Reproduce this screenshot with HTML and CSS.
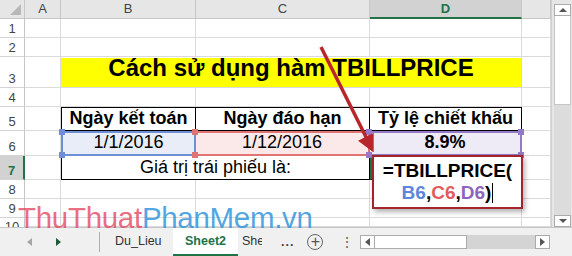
FILE: index.html
```html
<!DOCTYPE html>
<html lang="vi">
<head>
    <meta charset="UTF-8">
    <title>Cách sử dụng hàm TBILLPRICE</title>
    <link rel="stylesheet" href="styles.css">
</head>
<body>
    <div class="app">
        <div class="sheet-area">
            <div class="grid">
                <div class="corner"><span class="corner-tri"></span></div>
                <div class="col-head">A</div>
                <div class="col-head">B</div>
                <div class="col-head">C</div>
                <div class="col-head active">D</div>
                <div class="col-head"></div>

                <div class="row-head">1</div>
                <div class="cell"></div><div class="cell"></div><div class="cell"></div><div class="cell"></div><div class="cell"></div>

                <div class="row-head">2</div>
                <div class="cell"></div><div class="cell"></div><div class="cell"></div><div class="cell"></div><div class="cell"></div>

                <div class="row-head">3</div>
                <div class="cell"></div>
                <div class="cell title span3">Cách sử dụng hàm TBILLPRICE</div>
                <div class="cell"></div>

                <div class="row-head">4</div>
                <div class="cell"></div><div class="cell"></div><div class="cell"></div><div class="cell"></div><div class="cell"></div>

                <div class="row-head">5</div>
                <div class="cell"></div>
                <div class="cell th bl bt">Ngày kết toán</div>
                <div class="cell th bt">Ngày đáo hạn</div>
                <div class="cell th bt">Tỷ lệ chiết khấu</div>
                <div class="cell"></div>

                <div class="row-head">6</div>
                <div class="cell"></div>
                <div class="cell ref ref-blue">1/1/2016<i class="h tl"></i><i class="h bl2"></i></div>
                <div class="cell ref ref-red">1/12/2016<i class="h tl"></i><i class="h bl2"></i></div>
                <div class="cell ref ref-purple bold">8.9%<i class="h tl"></i><i class="h tr"></i><i class="h bl2"></i><i class="h br"></i></div>
                <div class="cell"></div>

                <div class="row-head active">7</div>
                <div class="cell"></div>
                <div class="cell td bl span2">Giá trị trái phiếu là:</div>
                <div class="cell td current"></div>
                <div class="cell"></div>

                <div class="row-head">8</div>
                <div class="cell"></div><div class="cell"></div><div class="cell"></div><div class="cell"></div><div class="cell"></div>

                <div class="row-head">9</div>
                <div class="cell"></div><div class="cell"></div><div class="cell"></div><div class="cell"></div><div class="cell"></div>

                <div class="row-head last">10</div>
                <div class="cell"></div><div class="cell"></div><div class="cell"></div><div class="cell"></div><div class="cell"></div>
            </div>

            <div class="vscroll">
                <div class="sb-btn"><span class="tri-up"></span></div>
                <div class="sb-thumb"></div>
                <div class="sb-track"></div>
                <div class="sb-btn"><span class="tri-down"></span></div>
            </div>

            <svg class="arrow" width="572" height="228" viewBox="0 0 572 228">
                <defs>
                    <marker id="head" markerWidth="5" markerHeight="5" refX="2" refY="2.5" orient="auto" markerUnits="strokeWidth">
                        <path d="M0,0 L5,2.5 L0,5 Z" fill="#b8262c"/>
                    </marker>
                </defs>
                <line x1="321" y1="47" x2="369" y2="143" stroke="#b8262c" stroke-width="3.5" marker-end="url(#head)"/>
            </svg>

            <div class="formula-box">
                <div>=TBILLPRICE(</div>
                <div><span class="c-blue">B6</span>,<span class="c-red">C6</span>,<span class="c-purple">D6</span>)<span class="caret"></span></div>
            </div>
        </div>

        <div class="tabbar">
            <div class="nav">
                <span class="tri-left"></span>
                <span class="tri-right"></span>
            </div>
            <div class="tabs">
                <span class="tab first">Du_Lieu</span>
                <span class="tab selected">Sheet2</span>
                <span class="tab cut">Sheet3</span>
                <span class="more">...</span>
                <span class="add">+</span>
                <span class="dots">⋮</span>
            </div>
            <div class="hscroll">
                <div class="sb-btn"><span class="tri-left small"></span></div>
                <div class="sb-thumb"></div>
                <div class="sb-track"></div>
                <div class="sb-btn"><span class="tri-right small gray"></span></div>
            </div>
        </div>

        <div class="watermark"><span class="wm-red">ThuThuat</span><span class="wm-blue">PhanMem.vn</span></div>
    </div>
</body>
</html>
```

FILE: styles.css
```css
* {
    margin: 0;
    padding: 0;
    box-sizing: border-box;
}

body {
    font-family: 'Liberation Sans', Arial, sans-serif;
    background: #ffffff;
    width: 572px;
    height: 256px;
    overflow: hidden;
}

.app {
    position: relative;
    width: 572px;
    height: 256px;
}

.sheet-area {
    position: relative;
    display: flex;
    height: 228px;
    border-bottom: 1px solid #c6c6c6;
}

.grid {
    display: grid;
    grid-template-columns: 25px 36px 135px 174px 152px 29px;
    grid-template-rows: 19px 19px 19px 31px 19px 24px 25px 24px 19px 19px 9px;
    width: 551px;
    overflow: hidden;
}

.corner {
    position: relative;
    background: #e6e6e6;
    border-right: 1px solid #c6c6c6;
    border-bottom: 1px solid #c6c6c6;
}

.corner-tri {
    position: absolute;
    right: 3px;
    bottom: 3px;
    width: 0;
    height: 0;
    border-left: 11px solid transparent;
    border-bottom: 11px solid #b8b8b8;
}

.col-head {
    background: #e6e6e6;
    border-right: 1px solid #c6c6c6;
    border-bottom: 1px solid #c6c6c6;
    color: #444;
    font-size: 13px;
    text-align: center;
    line-height: 18px;
}

.col-head.active {
    background: #d2d2d2;
    color: #217346;
    font-weight: bold;
    border-bottom: 2px solid #217346;
}

.row-head {
    background: #ffffff;
    border-right: 1px solid #c6c6c6;
    border-bottom: 1px solid #d4d4d4;
    color: #444;
    font-size: 13px;
    text-align: center;
    display: flex;
    align-items: flex-end;
    justify-content: center;
    padding-bottom: 1px;
    overflow: hidden;
}

.row-head.last {
    align-items: flex-start;
    padding-top: 1px;
    border-bottom: none;
}

.row-head.active {
    background: #d2d2d2;
    color: #217346;
    font-weight: bold;
    border-right: 2px solid #217346;
}

.cell {
    position: relative;
    border-right: 1px solid #dadada;
    border-bottom: 1px solid #dadada;
    font-size: 18px;
    color: #000;
    display: flex;
    align-items: flex-end;
    justify-content: center;
    white-space: nowrap;
}

.span3 { grid-column: span 3; }
.span2 { grid-column: span 2; }

.title {
    background: #ffff00;
    border-top: 1px solid #ffffff;
    font-size: 24px;
    font-weight: bold;
    padding-bottom: 5px;
}

.th {
    font-weight: bold;
    border-right: 1px solid #000;
    border-bottom: 1px solid #000;
    padding-bottom: 1px;
}

.bt { border-top: 1px solid #000; }
.bl { border-left: 1px solid #000; }
.bold { font-weight: bold; }

.td {
    border-right: 1px solid #000;
    border-bottom: 1px solid #000;
    padding-bottom: 1px;
}

.current {
    border-left: 2px solid #217346;
}

.ref {
    padding-bottom: 1px;
}

.ref-blue {
    background: #e8edf8;
    border: 2px solid #6d8fd6;
}

.ref-red {
    background: #fbe9e9;
    border: 2px solid #e07373;
    border-left: none;
}

.ref-purple {
    background: #eeeaf6;
    border: 2px solid #9379c6;
    border-left: none;
}

.h {
    position: absolute;
    width: 6px;
    height: 6px;
    z-index: 2;
}

.ref-blue .h { background: #6d8fd6; }
.ref-red .h { background: #e07373; }
.ref-purple .h { background: #9379c6; }

.h.tl { left: -4px; top: -4px; }
.h.bl2 { left: -4px; bottom: -4px; }
.h.tr { right: -4px; top: -4px; }
.h.br { right: -4px; bottom: -4px; }

.vscroll {
    width: 21px;
    background: #e6e6e6;
    border-left: 1px solid #d0d0d0;
    padding: 4px 1px 0 2px;
    display: flex;
    flex-direction: column;
}

.sb-btn {
    height: 12px;
    background: #ffffff;
    border: 1px solid #ababab;
    display: flex;
    align-items: center;
    justify-content: center;
    flex-shrink: 0;
}

.vscroll .sb-thumb {
    height: 89px;
    background: #ffffff;
    border: 1px solid #c6c6c6;
    border-top: none;
}

.vscroll .sb-track {
    flex: 1;
    background: #dcdcdc;
}

.tri-up {
    border-left: 4px solid transparent;
    border-right: 4px solid transparent;
    border-bottom: 4px solid #555;
}

.tri-down {
    border-left: 4px solid transparent;
    border-right: 4px solid transparent;
    border-top: 4px solid #555;
}

.tri-left {
    border-top: 4px solid transparent;
    border-bottom: 4px solid transparent;
    border-right: 5px solid #a6a6a6;
}

.tri-right {
    border-top: 4px solid transparent;
    border-bottom: 4px solid transparent;
    border-left: 5px solid #1e5c38;
}

.tri-left.small { border-right-color: #555; }
.tri-right.gray { border-left-color: #555; }

.arrow {
    position: absolute;
    left: 0;
    top: 0;
    pointer-events: none;
    z-index: 5;
}

.formula-box {
    position: absolute;
    left: 372px;
    top: 155px;
    width: 151px;
    height: 54px;
    background: #ffffff;
    border: 2px solid #a3242a;
    box-shadow: 2px 3px 5px rgba(0, 0, 0, 0.3);
    font-size: 19px;
    font-weight: bold;
    line-height: 22px;
    text-align: center;
    padding-top: 3px;
    z-index: 4;
}

.c-blue { color: #5b86dc; }
.c-red { color: #e25c5c; }
.c-purple { color: #8d64c0; }

.caret {
    display: inline-block;
    width: 1px;
    height: 20px;
    background: #000;
    vertical-align: -4px;
    margin-left: 1px;
}

.tabbar {
    display: flex;
    align-items: center;
    height: 28px;
    background: #f0f0f0;
    font-size: 12.5px;
    color: #333;
}

.nav {
    display: flex;
    align-items: center;
    gap: 24px;
    width: 100px;
    flex-shrink: 0;
    padding-left: 27px;
    height: 20px;
    border-right: 1px solid #b0b0b0;
}

.tabs {
    display: flex;
    align-items: center;
    height: 28px;
    width: 260px;
    flex-shrink: 0;
}

.tab {
    flex-shrink: 0;
    height: 28px;
    line-height: 26px;
    color: #333;
    white-space: nowrap;
}

.tab.first {
    width: 73px;
    padding-left: 15px;
}

.tab.selected {
    width: 65px;
    background: #ffffff;
    color: #217346;
    font-weight: bold;
    text-align: center;
    border-bottom: 2px solid #217346;
}

.tab.cut {
    width: 24px;
    padding-left: 4px;
    overflow: hidden;
}

.more {
    flex-shrink: 0;
    margin-left: 19px;
    font-weight: bold;
    color: #444;
    letter-spacing: 1px;
}

.add {
    flex-shrink: 0;
    margin-left: 13px;
    width: 16px;
    height: 16px;
    border: 1px solid #666;
    border-radius: 50%;
    font-size: 16px;
    line-height: 13px;
    text-align: center;
    color: #555;
}

.dots {
    flex-shrink: 0;
    margin-left: 17px;
    color: #666;
    font-size: 14px;
}

.hscroll {
    display: flex;
    width: 190px;
    height: 14px;
    flex-shrink: 0;
}

.hscroll .sb-btn {
    width: 15px;
    height: 14px;
}

.hscroll .sb-thumb {
    width: 92px;
    background: #ffffff;
    border: 1px solid #ababab;
    border-left: none;
}

.hscroll .sb-track {
    flex: 1;
    background: #d4d4d4;
}

.watermark {
    position: absolute;
    left: 18px;
    top: 201px;
    font-size: 29.5px;
    letter-spacing: -0.3px;
    z-index: 6;
    pointer-events: none;
    white-space: nowrap;
}

.wm-red { color: rgba(228, 70, 95, 0.8); }
.wm-blue { color: rgba(50, 150, 220, 0.85); }
```
